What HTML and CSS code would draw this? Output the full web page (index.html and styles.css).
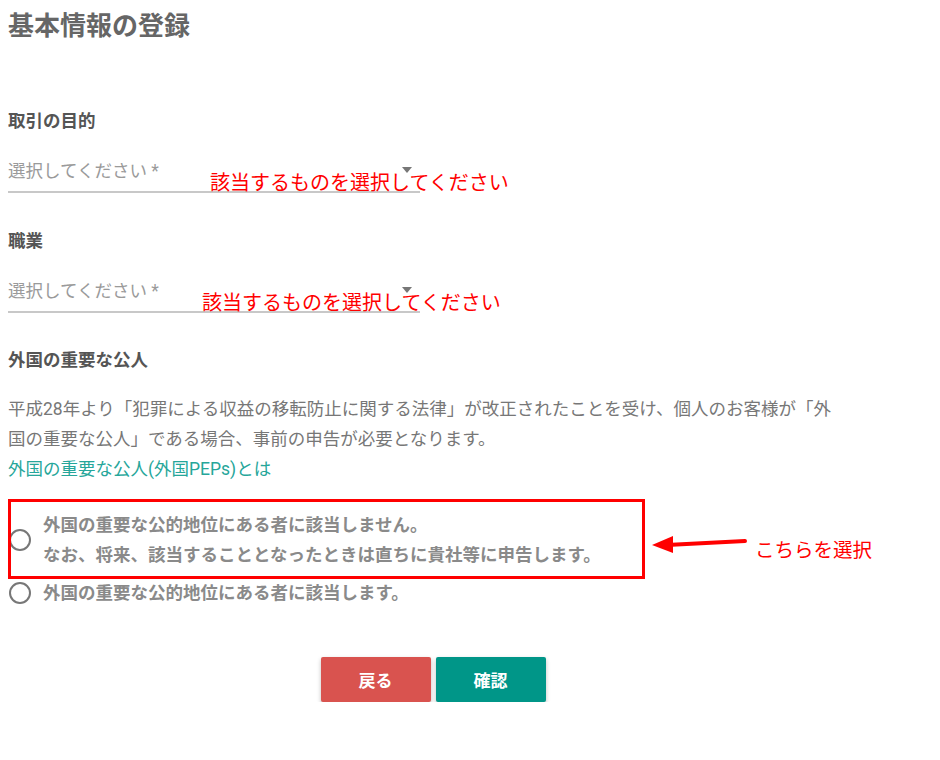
FILE: index.html
```html
<!DOCTYPE html>
<html lang="ja">
<head>
<meta charset="utf-8">
<title>基本情報の登録</title>
<link rel="stylesheet" href="styles.css">
</head>
<body>
<div class="page">
  <h1 class="title">基本情報の登録</h1>

  <div class="section first">
    <div class="label">取引の目的</div>
    <div class="select">
      <span class="placeholder">選択してください *</span>
      <span class="caret"></span>
      <span class="note note-1">該当するものを選択してください</span>
    </div>
  </div>

  <div class="section">
    <div class="label">職業</div>
    <div class="select">
      <span class="placeholder">選択してください *</span>
      <span class="caret"></span>
      <span class="note note-2">該当するものを選択してください</span>
    </div>
  </div>

  <div class="section pep">
    <div class="label">外国の重要な公人</div>
    <p class="desc">平成28年より「犯罪による収益の移転防止に関する法律」が改正されたことを受け、個人のお客様が「外国の重要な公人」である場合、事前の申告が必要となります。</p>
    <a class="link">外国の重要な公人(外国PEPs)とは</a>
  </div>

  <div class="radios">
    <label class="radio">
      <span class="circle"></span>
      <span class="radio-text">外国の重要な公的地位にある者に該当しません。<br>なお、将来、該当することとなったときは直ちに貴社等に申告します。</span>
    </label>
    <label class="radio second">
      <span class="circle"></span>
      <span class="radio-text">外国の重要な公的地位にある者に該当します。</span>
    </label>
    <div class="highlight"></div>
    <svg class="arrow" width="110" height="30" viewBox="0 0 110 30">
      <line x1="100" y1="12" x2="22" y2="16" stroke="#f00" stroke-width="4" stroke-linecap="round"/>
      <polygon points="7,16 28,7 28,24" fill="#f00"/>
    </svg>
    <span class="arrow-note">こちらを選択</span>
  </div>

  <div class="buttons">
    <button class="btn back">戻る</button>
    <button class="btn confirm">確認</button>
  </div>
</div>
</body>
</html>
```

FILE: styles.css
```css
html, body {
  margin: 0;
  padding: 0;
  background: #fff;
}
body {
  margin: 8px;
  font-family: Roboto, "Noto Sans CJK JP", sans-serif;
  color: #555;
}
.page {
  width: 850px;
}
.title {
  margin: 0;
  font-size: 26px;
  line-height: 36px;
  font-weight: 700;
  color: #666;
}
.section.first {
  margin-top: 65px;
}
.section {
  margin-top: 36px;
}
.section.pep {
  margin-top: 35px;
}
.label {
  font-size: 17.5px;
  line-height: 24px;
  font-weight: 700;
  color: #555;
}
.select {
  position: relative;
  width: 412px;
  margin-top: 26px;
  height: 32px;
  border-bottom: 2px solid #c8c8c8;
}
.placeholder {
  display: block;
  font-size: 17.5px;
  line-height: 24px;
  color: #9a9a9a;
}
.caret {
  position: absolute;
  left: 394px;
  top: 8px;
  width: 0;
  height: 0;
  border-left: 5px solid transparent;
  border-right: 5px solid transparent;
  border-top: 6px solid #777;
}
.note {
  position: absolute;
  font-size: 20px;
  line-height: 24px;
  color: #f00;
  white-space: nowrap;
}
.note-1 {
  left: 202px;
  top: 12px;
}
.note-2 {
  left: 194px;
  top: 12px;
}
.desc {
  margin: 22px 0 0;
  max-width: 836px;
  font-size: 17.5px;
  line-height: 30px;
  color: #777;
}
.link {
  display: block;
  font-size: 17.5px;
  line-height: 30px;
  color: #26a69a;
  text-decoration: none;
}
.radios {
  position: relative;
  margin-top: 26px;
}
.radio {
  display: flex;
  align-items: center;
  gap: 12px;
  padding-left: 1px;
}
.radio.second {
  margin-top: 8px;
}
.circle {
  flex: none;
  width: 18px;
  height: 18px;
  border: 2px solid #777;
  border-radius: 50%;
}
.radio-text {
  font-size: 17.5px;
  line-height: 30px;
  font-weight: 700;
  color: #8a8a8a;
}
.highlight {
  position: absolute;
  left: 0;
  top: -11px;
  width: 631px;
  height: 74px;
  border: 3px solid #f00;
}
.arrow {
  position: absolute;
  left: 637px;
  top: 19px;
}
.arrow-note {
  position: absolute;
  left: 747px;
  top: 29px;
  font-size: 19.5px;
  line-height: 24px;
  color: #f00;
  white-space: nowrap;
}
.buttons {
  display: flex;
  justify-content: center;
  gap: 5px;
  margin-top: 49px;
}
.btn {
  width: 110px;
  height: 45px;
  border: none;
  border-radius: 2px;
  color: #fff;
  font-family: Roboto, "Noto Sans CJK JP", sans-serif;
  font-size: 17px;
  font-weight: 700;
  box-shadow: 0 2px 4px rgba(0,0,0,0.25);
}
.back {
  background: #d9534f;
}
.confirm {
  background: #009688;
}
```
